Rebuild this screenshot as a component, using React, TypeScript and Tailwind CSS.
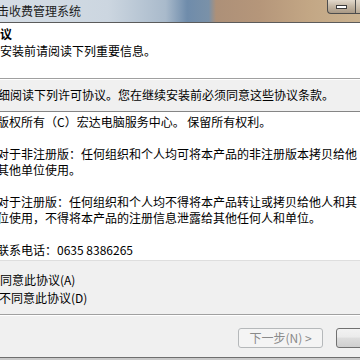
export default function App() {
  return (
    <div className="w-[360px] h-[360px] overflow-hidden flex flex-col bg-[#f0f0f0] font-['Noto_Sans_CJK_SC','Noto_Sans_CJK_JP',sans-serif] text-[12px] text-black">
      {/* title bar */}
      <div className="h-[22px] shrink-0 flex items-start bg-[linear-gradient(90deg,#d5dde5_0%,#ccd6e0_30%,#a9bacb_46%,#6f8cab_52%,#7a91a8_58%,#ad9078_60%,#b5967a_72%,#c3a785_86%,#cab290_100%)]">
        <span className="mt-[4px] -ml-[3px] leading-[14px] text-[#1c1c1c] whitespace-nowrap">
          击收费管理系统
        </span>
        <div className="ml-auto flex">
          <div className="w-[28px] h-[14px] rounded-bl-[4px] border-l border-b border-[#4d4d4d] bg-[linear-gradient(180deg,#e2d9cc,#c2b5a3_50%,#a99985)] flex items-center justify-center">
            <span className="block w-[11px] h-[4px] bg-white border border-[#3c3c3c]" />
          </div>
          <div className="w-[5px] h-[14px] border-l border-b border-[#4d4d4d] bg-[linear-gradient(180deg,#e2d9cc,#b8a994)]" />
        </div>
      </div>
      <div className="h-[1px] shrink-0 bg-[#5b5b5b]" />

      {/* header */}
      <div className="h-[55px] shrink-0 bg-white flex flex-col">
        <div className="mt-[4px] leading-[14px] font-bold whitespace-nowrap">议</div>
        <div className="mt-[3px] leading-[14px] whitespace-nowrap">安装前请阅读下列重要信息。</div>
      </div>
      <div className="h-[1px] shrink-0 bg-[#a0a0a0]" />
      <div className="h-[1px] shrink-0 bg-white" />

      {/* body */}
      <div className="pt-[7px] -ml-[2px] leading-4 whitespace-nowrap">
        细阅读下列许可协议。您在继续安装前必须同意这些协议条款。
      </div>

      <div className="mt-[8px] bg-white border-t border-t-[#858585] border-b border-b-[#dedede] pt-[2px] pb-[2px] leading-4 whitespace-nowrap -ml-[3px]">
        <div>版权所有（C）宏达电脑服务中心。 保留所有权利。</div>
        <div className="h-4" />
        <div>对于非注册版：任何组织和个人均可将本产品的非注册版本拷贝给他</div>
        <div>其他单位使用。</div>
        <div className="h-4" />
        <div>对于注册版：任何组织和个人均不得将本产品转让或拷贝给他人和其</div>
        <div>位使用，不得将本产品的注册信息泄露给其他任何人和单位。</div>
        <div className="h-4" />
        <div>联系电话：0635 8386265</div>
      </div>

      <div className="mt-[10px] leading-[18px] whitespace-nowrap">
        <div>同意此协议(A)</div>
        <div className="-ml-[1px]">不同意此协议(D)</div>
      </div>

      <div className="mt-[7px] h-[1px] shrink-0 bg-[#a0a0a0]" />
      <div className="h-[1px] shrink-0 bg-white" />

      <div className="mt-[12px] flex gap-[13px] pl-[238px]">
        <button
          disabled
          className="w-[85px] h-[20px] shrink-0 rounded-[3px] border border-[#b5b8ba] bg-[#f4f4f4] text-[#8a8a8a] text-[12px] leading-[18px] flex items-center justify-center"
        >
          下一步(N) &gt;
        </button>
        <button className="w-[80px] h-[20px] shrink-0 rounded-[3px] border border-[#707070] bg-[linear-gradient(180deg,#f2f2f2,#ebebeb_45%,#dddddd_50%,#cfcfcf)]" />
      </div>

      <div className="mt-auto h-[3px] shrink-0 border-t border-[#6e6e6e] bg-[#c9c9c9]" />
    </div>
  )
}
